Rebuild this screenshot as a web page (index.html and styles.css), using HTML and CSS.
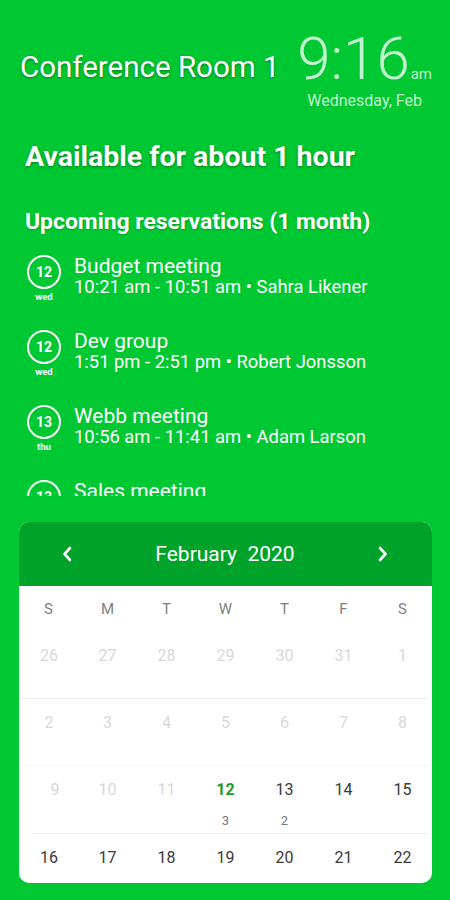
FILE: index.html
```html
<!DOCTYPE html>
<html lang="en">
<head>
<meta charset="utf-8">
<title>Conference Room 1</title>
<link rel="stylesheet" href="styles.css">
</head>
<body>
<div class="screen">
  <header class="top">
    <h1 class="room">Conference Room 1</h1>
    <div class="clock">
      <div class="time"><span class="hm">9:16</span><span class="ampm">am</span></div>
      <div class="date">Wednesday, Feb</div>
    </div>
  </header>

  <div class="status">Available for about 1 hour</div>
  <div class="section-title">Upcoming reservations (1 month)</div>

  <ul class="list">
    <li class="item">
      <div class="badge"><div class="circle">12</div><div class="dow">wed</div></div>
      <div class="info"><div class="title">Budget meeting</div><div class="sub">10:21 am - 10:51 am • Sahra Likener</div></div>
    </li>
    <li class="item">
      <div class="badge"><div class="circle">12</div><div class="dow">wed</div></div>
      <div class="info"><div class="title">Dev group</div><div class="sub">1:51 pm - 2:51 pm • Robert Jonsson</div></div>
    </li>
    <li class="item">
      <div class="badge"><div class="circle">13</div><div class="dow">thu</div></div>
      <div class="info"><div class="title">Webb meeting</div><div class="sub">10:56 am - 11:41 am • Adam Larson</div></div>
    </li>
    <li class="item">
      <div class="badge"><div class="circle">13</div><div class="dow">thu</div></div>
      <div class="info"><div class="title">Sales meeting</div><div class="sub">1:15 pm - 2:00 pm • Adam Larson</div></div>
    </li>
  </ul>

  <section class="calendar">
    <div class="cal-head">
      <span class="nav"><svg width="10" height="16" viewBox="0 0 10 16"><path d="M8 2 L2.5 8 L8 14" fill="none" stroke="#fff" stroke-width="2.6" stroke-linecap="round" stroke-linejoin="round"/></svg></span>
      <span class="month">February&nbsp; 2020</span>
      <span class="nav"><svg width="10" height="16" viewBox="0 0 10 16"><path d="M2 2 L7.5 8 L2 14" fill="none" stroke="#fff" stroke-width="2.6" stroke-linecap="round" stroke-linejoin="round"/></svg></span>
    </div>
    <div class="cal-body">
      <div class="weekdays">
        <span>S</span><span>M</span><span>T</span><span>W</span><span>T</span><span>F</span><span>S</span>
      </div>
      <div class="week">
        <div class="day past">26</div><div class="day past">27</div><div class="day past">28</div><div class="day past">29</div><div class="day past">30</div><div class="day past">31</div><div class="day past">1</div>
      </div>
      <div class="week faint">
        <div class="day past">2</div><div class="day past">3</div><div class="day past">4</div><div class="day past">5</div><div class="day past">6</div><div class="day past">7</div><div class="day past">8</div>
      </div>
      <div class="week inset">
        <div class="day past">9</div><div class="day past">10</div><div class="day past">11</div>
        <div class="day today">12<span class="count">3</span></div>
        <div class="day">13<span class="count">2</span></div>
        <div class="day">14</div><div class="day">15</div>
      </div>
      <div class="week">
        <div class="day">16</div><div class="day">17</div><div class="day">18</div><div class="day">19</div><div class="day">20</div><div class="day">21</div><div class="day">22</div>
      </div>
    </div>
  </section>
</div>
</body>
</html>
```

FILE: styles.css
```css
* { box-sizing: border-box; }

html, body {
  margin: 0;
  padding: 0;
}

body {
  background: #00c832;
  font-family: Roboto, "Liberation Sans", sans-serif;
  color: #fff;
  width: 450px;
  height: 900px;
  overflow: hidden;
}

.screen {
  display: flex;
  flex-direction: column;
}

.top {
  display: flex;
  justify-content: space-between;
  align-items: flex-start;
  height: 109px;
  padding: 29px 18px 0 20px;
}

.room {
  margin: 21px 0 0 0;
  font-size: 29.5px;
  line-height: 34px;
  font-weight: 400;
  white-space: nowrap;
  text-shadow: 0 1px 3px rgba(0, 70, 10, 0.55);
}

.clock {
  display: flex;
  flex-direction: column;
  color: rgba(255, 255, 255, 0.76);
}

.time {
  font-size: 60px;
  line-height: 60px;
  height: 60px;
  font-weight: 300;
  white-space: nowrap;
}

.ampm {
  font-size: 15px;
  line-height: 1;
  font-weight: 400;
  margin-left: 1px;
}

.date {
  margin-top: 3px;
  font-size: 16px;
  line-height: 17px;
  text-align: center;
  white-space: nowrap;
}

.status {
  margin-top: 31px;
  padding-left: 25px;
  font-size: 28.5px;
  line-height: 33px;
  font-weight: 700;
  white-space: nowrap;
  text-shadow: 0 1px 3px rgba(0, 70, 10, 0.55);
}

.section-title {
  margin-top: 36px;
  padding-left: 25px;
  font-size: 22.9px;
  line-height: 26px;
  font-weight: 700;
  white-space: nowrap;
  text-shadow: 0 1px 2px rgba(0, 70, 10, 0.3);
}

.list {
  list-style: none;
  margin: 20px 0 0 0;
  padding: 0;
  height: 241px;
  overflow: hidden;
}

.item {
  display: flex;
  height: 75px;
}

.badge {
  margin-left: 27px;
  width: 34px;
  display: flex;
  flex-direction: column;
  align-items: center;
}

.circle {
  width: 34px;
  height: 34px;
  border: 2px solid #fff;
  border-radius: 50%;
  display: flex;
  align-items: center;
  justify-content: center;
  font-size: 14px;
  font-weight: 700;
}

.dow {
  margin-top: 2px;
  font-size: 9.5px;
  line-height: 12px;
  font-weight: 700;
}

.info {
  margin-left: 13px;
  white-space: nowrap;
}

.title {
  font-size: 21px;
  line-height: 23px;
}

.sub {
  font-size: 18.4px;
  line-height: 18px;
}

.calendar {
  margin: 26px 0 0 19px;
  width: 413px;
  height: 361px;
  border-radius: 10px;
  overflow: hidden;
  background: #fff;
}

.cal-head {
  height: 64px;
  background: #00a32a;
  display: flex;
  align-items: center;
  justify-content: space-between;
  padding: 0 44px 0 43px;
}

.nav {
  display: flex;
  width: 10px;
  justify-content: center;
}

.month {
  font-size: 21px;
  font-weight: 400;
  color: #fff;
}

.cal-body {
  color: #333;
}

.weekdays {
  display: grid;
  grid-template-columns: repeat(7, 59px);
  height: 46px;
  align-items: center;
  font-size: 15px;
  color: #808080;
  text-align: center;
}

.week {
  display: grid;
  grid-template-columns: 58px repeat(6, 59px);
  height: 67px;
  border-bottom: 1px solid #eeeeee;
  margin: 0 4px 0 1px;
}

.week.faint {
  border-bottom-color: #f6f6f6;
}

.week.inset {
  margin-left: 13px;
  grid-template-columns: 46px repeat(6, 59px);
  height: 68px;
}

.day {
  display: flex;
  flex-direction: column;
  align-items: center;
  padding-top: 14px;
  font-size: 16px;
  line-height: 20px;
  color: #3a3a3a;
}

.day.past {
  color: #d8d8d8;
}

.day.today {
  color: #1e9a2e;
  font-weight: 700;
}

.count {
  margin-top: 13px;
  font-size: 13px;
  line-height: 16px;
  font-weight: 400;
  color: #777;
}
```
